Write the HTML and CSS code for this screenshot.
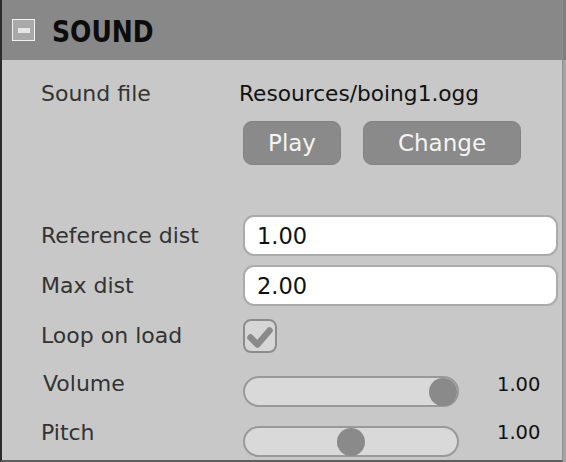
FILE: index.html
```html
<!DOCTYPE html>
<html>
<head>
<meta charset="utf-8">
<link rel="stylesheet" href="styles.css">
</head>
<body>
<div class="panel">
  <header class="head">
    <span class="collapse"><span class="collapse-bar"></span></span>
    <h1 class="title">SOUND</h1>
  </header>
  <div class="content">
    <div class="row row-file">
      <span class="label">Sound file</span>
      <span class="file-value">Resources/boing1.ogg</span>
    </div>
    <div class="row row-buttons">
      <div class="btn btn-play">Play</div>
      <div class="btn btn-change">Change</div>
    </div>
    <div class="row row-field row-ref">
      <span class="label">Reference dist</span>
      <div class="text-input">1.00</div>
    </div>
    <div class="row row-field row-max">
      <span class="label">Max dist</span>
      <div class="text-input">2.00</div>
    </div>
    <div class="row row-check">
      <span class="label">Loop on load</span>
      <div class="checkbox">
        <svg width="30" height="30" viewBox="0 0 30 30"><path d="M5.5 16.5 L12.5 23.5 L24.5 9.5" fill="none" stroke="#8a8a8a" stroke-width="6.5" stroke-linecap="round" stroke-linejoin="round"/></svg>
      </div>
    </div>
    <div class="row row-slider row-volume">
      <span class="label label-volume">Volume</span>
      <div class="slider"><span class="thumb" style="--p:1"></span></div>
      <span class="slider-value">1.00</span>
    </div>
    <div class="row row-slider row-pitch">
      <span class="label">Pitch</span>
      <div class="slider"><span class="thumb" style="--p:0.5"></span></div>
      <span class="slider-value">1.00</span>
    </div>
  </div>
</div>
</body>
</html>
```
FILE: styles.css
```css
html, body {
  margin: 0;
  padding: 0;
}
body {
  width: 566px;
  height: 462px;
  overflow: hidden;
  background: linear-gradient(#7e7e7e 0, #7e7e7e 60px, #a4a4a4 60px);
  font-family: "DejaVu Sans", sans-serif;
}
.panel {
  box-sizing: border-box;
  width: 563px;
  height: 462px;
  border-left: 2px solid #2b2b2b;
  border-right: 1px solid #8e8e8e;
  border-bottom: 2px solid #5e5e5e;
  background: #c8c8c8;
  display: flex;
  flex-direction: column;
}
.head {
  height: 60px;
  flex: none;
  background: #888888;
  display: flex;
  align-items: center;
  padding-left: 10px;
}
.collapse {
  box-sizing: border-box;
  width: 23px;
  height: 22px;
  border: 1px solid #f2f2f2;
  background: #a9a9a9;
  display: flex;
  align-items: center;
  justify-content: center;
}
.collapse-bar {
  width: 12px;
  height: 5px;
  background: #e6e6e6;
}
.title {
  margin: 1px 0 0 17px;
  font-family: "DejaVu Sans", sans-serif;
  font-weight: bold;
  font-size: 31px;
  line-height: 34px;
  color: #0c0c0c;
  transform: scaleX(0.81);
  transform-origin: left center;
}
.content {
  padding-left: 39px;
  display: flex;
  flex-direction: column;
}
.row {
  display: flex;
  align-items: center;
}
.label {
  width: 202px;
  flex: none;
  font-size: 22px;
  line-height: 24px;
  color: #333333;
}
.row-file {
  margin-top: 22px;
  height: 24px;
}
.file-value {
  margin-left: -4px;
  font-size: 21.7px;
  line-height: 24px;
  color: #111111;
}
.row-buttons {
  margin-top: 15px;
  height: 44px;
  padding-left: 202px;
  gap: 22px;
}
.btn {
  box-sizing: border-box;
  height: 44px;
  border: 1px solid #828282;
  border-radius: 9px;
  background: #8a8a8a;
  color: #f4f4f4;
  font-size: 23px;
  line-height: 42px;
  text-align: center;
}
.btn-play { width: 98px; }
.btn-change { width: 158px; }
.row-ref { margin-top: 50px; height: 41px; }
.row-max { margin-top: 9px; height: 41px; }
.text-input {
  box-sizing: border-box;
  width: 315px;
  height: 41px;
  border: 2px solid #ababab;
  border-radius: 11px;
  background: #ffffff;
  padding-left: 12px;
  font-size: 22.5px;
  line-height: 39px;
  color: #111111;
}
.row-check {
  margin-top: 13px;
  height: 34px;
}
.checkbox {
  box-sizing: border-box;
  width: 34px;
  height: 34px;
  border: 2px solid #8c8c8c;
  border-radius: 8px;
  background: #d6d6d6;
  display: flex;
  align-items: center;
  justify-content: center;
}
.row-slider {
  align-items: flex-start;
}
.row-volume { margin-top: 19px; }
.row-pitch { margin-top: 14px; }
.label-volume { padding-left: 2px; width: 200px; }
.slider {
  position: relative;
  box-sizing: border-box;
  width: 216px;
  height: 31px;
  margin-top: 4px;
  border: 2px solid #999999;
  border-radius: 16px;
  background: #d9d9d9;
}
.row-pitch .slider { margin-top: 5px; }
.thumb {
  position: absolute;
  top: 50%;
  left: calc((100% - 28px) * var(--p));
  width: 28px;
  height: 28px;
  margin-top: -14px;
  border-radius: 50%;
  background: #8a8a8a;
}
.slider-value {
  margin-left: 38px;
  margin-top: 1px;
  font-size: 19.5px;
  line-height: 24px;
  color: #111111;
}
.row-pitch .slider-value { margin-top: 0; }
```
